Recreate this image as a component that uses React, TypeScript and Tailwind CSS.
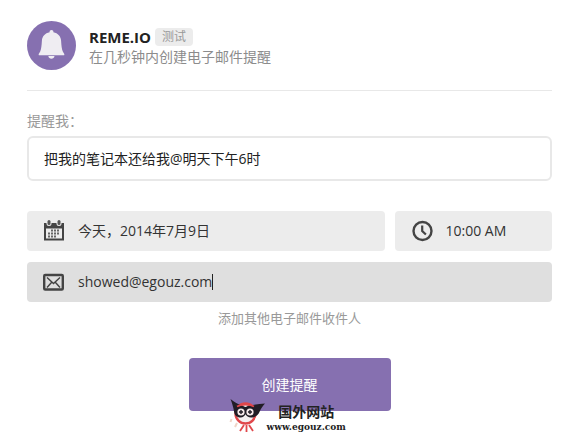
import { useState } from 'react';
import type { ReactNode } from 'react';

const FONT = "font-['Open_Sans','Noto_Sans_CJK_SC',sans-serif]";

function BellLogo() {
  return (
    <svg viewBox="0 0 49 49" className="size-[49px] shrink-0" aria-hidden="true">
      <circle cx="24.5" cy="24.5" r="24.5" fill="#8670b0" />
      <path
        d="M24.500 9c1.200 0 1.900.8 1.900 1.800v.5c4.600.9 7.400 4.100 7.700 8.400.3 5 .6 8.200 1.700 10.800.5 1.200 1.400 1.900 1.600 2.900 0 .6-.4.900-1 .9H12.600c-.6 0-1-.3-1-.9.2-1 1.100-1.700 1.600-2.900 1.100-2.600 1.400-5.800 1.700-10.800.3-4.300 3.100-7.500 7.700-8.400v-.5c0-1 .7-1.800 1.900-1.800z"
        fill="#efedf2"
      />
      <path d="M21.300 35h6.200c-.3 1.700-1.500 2.700-3.100 2.700s-2.800-1-3.100-2.700z" fill="#efedf2" />
    </svg>
  );
}

function CalendarIcon() {
  return (
    <svg viewBox="0 0 22 22" className="size-[22px] shrink-0" aria-hidden="true">
      <path d="M1 3h20v17.500H1z" fill="#444" />
      <path d="M3 8.500h16v10H3z" fill="#ededed" />
      <g fill="#ededed">
        <rect x="3.500" y="0" width="5" height="6" rx="2.500" />
        <rect x="13.500" y="0" width="5" height="6" rx="2.500" />
      </g>
      <g fill="#555">
        <rect x="4.500" y="0" width="3" height="5" rx="1.500" />
        <rect x="14.500" y="0" width="3" height="5" rx="1.500" />
      </g>
      <path
        d="M8 9.500h2v2H8zm3 0h2v2h-2zm3 0h2v2h-2zM5 12.500h2v2H5zm3 0h2v2H8zm3 0h2v2h-2zm3 0h2v2h-2zM5 15.500h2v2H5zm3 0h2v2H8zm3 0h2v2h-2z"
        fill="#666"
      />
    </svg>
  );
}

function MailIcon() {
  return (
    <svg viewBox="0 0 22 22" className="size-[22px] shrink-0" fill="none" stroke="#444" aria-hidden="true">
      <rect x="1.200" y="4" width="18.600" height="14.500" rx="1" strokeWidth="2.400" />
      <path d="M4 6.500l6.500 6 6.500-6M4 16.500l4.500-5M17 16.500l-4.500-5" strokeWidth="1.400" />
    </svg>
  );
}

function ClockIcon() {
  return (
    <svg viewBox="0 0 22 22" className="size-[22px] shrink-0" fill="none" stroke="#444" aria-hidden="true">
      <circle cx="11.500" cy="11" r="9" strokeWidth="2.400" />
      <path d="M11.200 5.500V11l3.700 3.500" strokeWidth="2.200" />
    </svg>
  );
}

function SiteMark() {
  return (
    <svg viewBox="0 0 38 35" className="h-[35px] w-[38px] shrink-0" aria-hidden="true">
      <circle cx="16.500" cy="15.500" r="10" fill="#f4eff0" stroke="#e0474b" strokeWidth="2.400" />
      <path
        d="M1.500 1c3.500 3 7 5.200 11 6.200 1.600.4 2.800 1.800 4 1.800s2-1.400 4-1.700C26 6.500 31 6 36 5.500c-2 2.500-4 4.800-5.300 8-1.500 3.800-4.500 6-8.700 6-2.700 0-4.500-1.400-5.500-3.200-1 1.800-2.500 3.200-5 3.200-3.700 0-6-2.300-6.500-6C4.400 9.200 3 5 1.500 1z"
        fill="#211d25"
      />
      <path d="M8 8.500c4-2.400 13-2.400 17 0" stroke="#e0474b" strokeWidth="1.800" fill="none" />
      <g fill="#f6e9ea">
        <circle cx="12" cy="14" r="3.600" />
        <circle cx="21" cy="14" r="3.600" />
      </g>
      <path d="M12 12v4M10 14h4M21 12v4M19 14h4" stroke="#211d25" strokeWidth="1.400" />
      <path d="M15 27l-4 6M17.500 27v7M20 27l4 6" stroke="#e0474b" strokeWidth="1.800" fill="none" />
      <path d="M8 25l-2 4M2.500 21l-1 3" stroke="#f0d5c8" strokeWidth="2" />
    </svg>
  );
}

interface FieldProps {
  id: string;
  label: string;
  icon: ReactNode;
  className: string;
  children: ReactNode;
}

function Field({ id, label, icon, className, children }: FieldProps) {
  return (
    <div className={`flex h-10 items-center rounded px-4 ${className}`}>
      <label htmlFor={id} aria-label={label} className="mr-[13px] shrink-0">
        {icon}
      </label>
      {children}
    </div>
  );
}

export default function App() {
  const [task, setTask] = useState('把我的笔记本还给我@明天下午6时');
  const [date, setDate] = useState('今天，2014年7月9日');
  const [time, setTime] = useState('10:00 AM');
  const [email, setEmail] = useState('showed@egouz.com');

  return (
    <main className={`${FONT} min-h-screen bg-white pt-[21px] pr-7 pl-[27px] text-sm text-[#333]`}>
      <header className="flex items-center gap-[13px] border-b border-[#e8e8e8] pb-5">
        <BellLogo />
        <div className="pt-0.5">
          <div className="flex items-center gap-1">
            <h1 className="text-[15px] leading-5 font-bold text-[#222]">REME.IO</h1>
            <span className="rounded bg-[#ececec] px-[7px] text-xs leading-[18px] text-[#999]">测试</span>
          </div>
          <p className="leading-5 text-[#8c8c8c]">在几秒钟内创建电子邮件提醒</p>
        </div>
      </header>

      <form onSubmit={e => e.preventDefault()}>
        <label htmlFor="task" className="mt-5 mb-[5px] block leading-5 text-[#999]">
          提醒我：
        </label>
        <input
          id="task"
          value={task}
          onChange={e => setTask(e.target.value)}
          className="block h-[45px] w-full rounded-md border-2 border-[#e8e8e8] px-[15px] pb-0.5 text-[#222] outline-none"
        />

        <div className="mt-[30px] flex gap-[10px]">
          <Field id="date" label="日期" icon={<CalendarIcon />} className="min-w-0 grow bg-[#ececec]">
            <input
              id="date"
              value={date}
              onChange={e => setDate(e.target.value)}
              className="w-full min-w-0 outline-none"
            />
          </Field>
          <Field id="time" label="时间" icon={<ClockIcon />} className="w-[30%] bg-[#ececec]">
            <input
              id="time"
              value={time}
              onChange={e => setTime(e.target.value)}
              className="w-full min-w-0 outline-none"
            />
          </Field>
        </div>

        <Field id="email" label="电子邮件" icon={<MailIcon />} className="mt-[11px] bg-[#dfdfdf]">
          <input
            id="email"
            type="email"
            value={email}
            onChange={e => setEmail(e.target.value)}
            className="field-sizing-content caret-transparent outline-none"
          />
          <span className="h-4 w-px bg-[#222]" />
        </Field>

        <div className="mt-1.5 text-center">
          <a href="#recipients" className="block text-[13px] leading-5 text-[#999]">
            添加其他电子邮件收件人
          </a>
        </div>

        <div className="relative mx-auto mt-[30px] w-[202px]">
          <button type="submit" className="block h-[53px] w-full rounded bg-[#8670b0] text-white">
            创建提醒
          </button>
          {/* site stamp over the button edge */}
          <div className="pointer-events-none absolute top-10 left-10 flex">
            <SiteMark />
            <div className="text-center font-bold whitespace-nowrap text-[#222]">
              <div className="mt-[5px] leading-[18px]">国外网站</div>
              <div className="font-['DejaVu_Serif',serif] text-[9px] leading-3">www.egouz.com</div>
            </div>
          </div>
        </div>
      </form>
    </main>
  );
}
